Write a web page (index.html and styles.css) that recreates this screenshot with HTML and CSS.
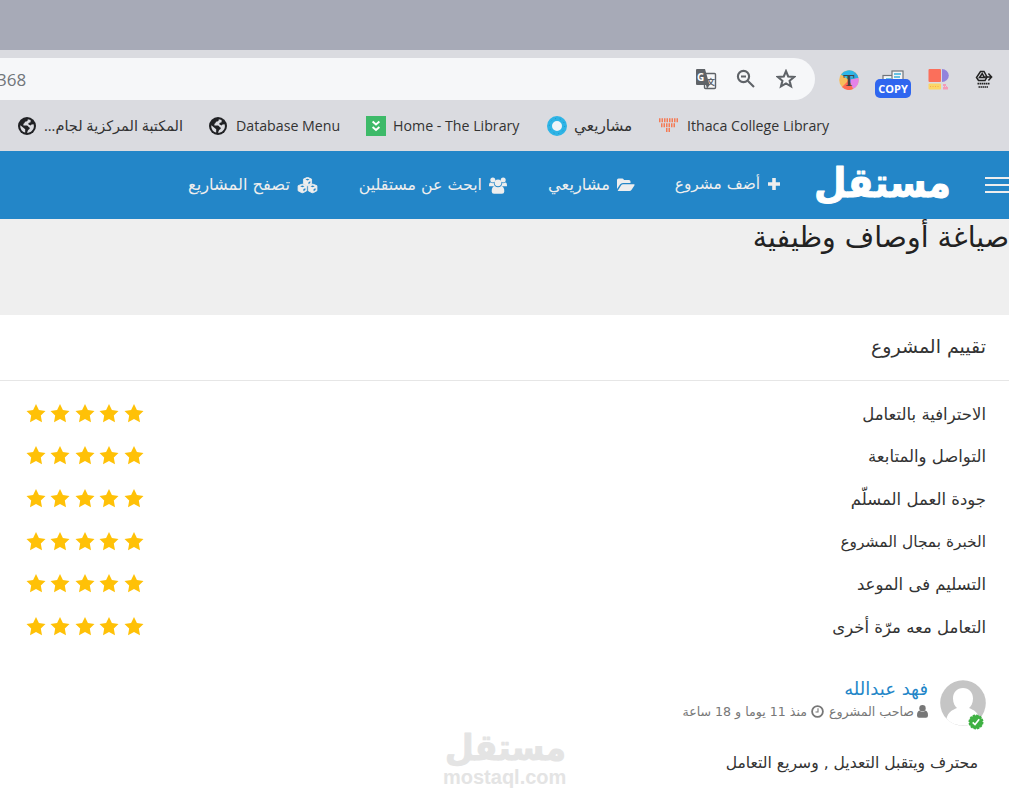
FILE: index.html
```html
<!DOCTYPE html>
<html lang="ar">

<head>
    <meta charset="UTF-8">
    <meta name="viewport" content="width=device-width, initial-scale=1.0">
    <title>مستقل</title>
    <link rel="stylesheet" href="styles.css">
</head>

<body>
    <!-- shared icons -->
    <svg class="sprite">
        <symbol id="globe" viewBox="0 0 18 18">
            <circle cx="9" cy="9" r="9" fill="#202124"/>
            <path d="M9.8 2.2 C10 4 8.4 4.6 7 4.8 C6.7 6 6 6.6 5.4 7 L5.4 8.4 L9 8.6 C10.5 9 10.4 10.6 11.8 10.8 C12 12.2 10.5 12.7 10 13.3 L9 15.8 C13 15.8 15.9 12.8 15.9 9 L15.6 7.3 L13.5 7.5 L12.6 8.4 L10.5 7.6 L10.4 6 L12.6 5.2 L12.6 3.1 Z" fill="#dadbe0"/>
            <path d="M2.3 8.2 L6 11.2 L7.2 12.2 L7.2 15.6 C4.2 15 2 12 2.3 8.2 Z" fill="#dadbe0"/>
        </symbol>
        <symbol id="star" viewBox="0 0 20 19">
            <path d="M10 0 L12.9 5.9 L19.5 6.9 L14.8 11.5 L16 18.2 L10 15 L4 18.2 L5.2 11.5 L0.5 6.9 L7.1 5.9 Z"/>
        </symbol>
        <symbol id="cube" viewBox="0 0 12 12">
            <path d="M6 0.4 L11.2 2.6 V8.6 L6 11.4 L0.8 8.6 V2.6 Z" fill="#eee" stroke="#eee" stroke-linejoin="round"/>
            <path d="M3.4 3.3 L6 2.3 L8.6 3.3 L6 4.4 Z M7.2 6.6 L9.6 5.5 V7.8 L7.2 9.1 Z" fill="#2386c8"/>
        </symbol>
    </svg>

    <div class="titlebar"></div>

    <!-- browser toolbar -->
    <div class="toolbar">
        <div class="address">
            <span class="url">368</span>
            <svg class="translate" width="22" height="22" viewBox="0 0 22 22">
                <rect x="9.5" y="5.5" width="11" height="15" rx="1" fill="none" stroke="#5f6368" stroke-width="1.4"/>
                <path d="M2 1 H10 L14.5 17 H2 Q1 17 1 16 V2 Q1 1 2 1 Z" fill="#5f6368"/>
                <path d="M11 17 L14.5 17 L12 21 Z" fill="#5f6368"/>
                <text x="2" y="13" class="g">G</text>
                <text x="11.4" y="16.5" class="wen">文</text>
            </svg>
            <svg class="zoom" width="20" height="20" viewBox="0 0 20 20" fill="none" stroke="#5f6368" stroke-width="2.1">
                <circle cx="7.5" cy="7.5" r="5.6"/>
                <path d="M5 7.5 H10 M11.7 11.7 L18 18"/>
            </svg>
            <svg class="fav" width="20" height="20" viewBox="0 0 20 20">
                <path d="M10 2.2 L12.2 7.5 L18 8 L13.6 11.8 L15 17.4 L10 14.4 L5 17.4 L6.4 11.8 L2 8 L7.8 7.5 Z" fill="none" stroke="#5f6368" stroke-width="2.1"/>
            </svg>
        </div>
        <svg class="ext ext_t" width="20" height="20" viewBox="0 0 20 20">
            <circle cx="10" cy="10" r="9.8" fill="#f6bd5c"/>
            <path d="M10 10 L2 4.5 A9.8 9.8 0 0 1 16 2.3 Z" fill="#2db6e8"/>
            <path d="M10 10 L16 2.3 A9.8 9.8 0 0 1 19.5 8 Z" fill="#27a9e0"/>
            <path d="M10 10 L19.5 8 A9.8 9.8 0 0 1 14 19 Z" fill="#e583e8"/>
            <path d="M10 10 L14 19 A9.8 9.8 0 0 1 3 17 Z" fill="#ff6b52"/>
            <text x="10" y="16" text-anchor="middle" class="tee">T</text>
        </svg>
        <div class="ext ext_copy">
            <svg width="24" height="14" viewBox="0 0 24 14" fill="#f4f5f7" stroke="#70757a" stroke-width="1.2">
                <rect x="1" y="5.5" width="12" height="10"/>
                <rect x="10" y="1" width="11" height="12"/>
                <path d="M12 4 H19 M12 7 H18 M4 9 H9" stroke="#3ab0dc" stroke-width="1.6"/>
            </svg>
            <span class="badge">COPY</span>
        </div>
        <svg class="ext ext_shapes" width="21" height="21" viewBox="0 0 21 21">
            <rect x="0.5" y="0" width="12.5" height="13" rx="1" fill="#fb6f5b"/>
            <path d="M14 0 A6.8 6.5 0 0 1 14 13 Z" fill="#9283dc"/>
            <rect x="0.5" y="14.5" width="12.5" height="6" rx="1" fill="#fcd566"/>
            <path d="M2 17.5 H12" stroke="#f4a850" stroke-dasharray="1 1.5"/>
            <path d="M15 15 H18 V17 H20 V20.5 H15 Z" fill="#f59bb8"/>
            <path d="M15 17.5 H20" stroke="#dadbe0" stroke-dasharray="1 1"/>
        </svg>
        <svg class="ext ext_drive" width="18" height="20" viewBox="0 0 18 20" fill="none" stroke="#222" stroke-width="1.5">
            <path d="M5.5 1.5 H9 L12 7 L10 10.5 H3.5 L1.5 7.5 Z M4.5 7.5 H9.6 L7.2 3.6 Z"/>
            <path d="M10 7 H16 M13.4 3.6 L16.6 7 L13.4 10.4"/>
            <path d="M2.5 13.6 H14.5" stroke-width="1.8" stroke-dasharray="1.6 0.5"/>
            <path d="M3.5 17 H13" stroke-width="1.6" stroke-dasharray="1.6 0.5"/>
        </svg>
    </div>

    <!-- bookmarks -->
    <div class="bookmarks">
        <a class="bm bm1"><svg width="18" height="18"><use href="#globe"/></svg><span dir="rtl">المكتبة المركزية لجام...</span></a>
        <a class="bm bm2"><svg width="18" height="18"><use href="#globe"/></svg><span>Database Menu</span></a>
        <a class="bm bm3">
            <svg width="20" height="20" viewBox="0 0 20 20">
                <rect width="20" height="20" fill="#3dba69"/>
                <path d="M6.6 5.5 L10 8.5 L13.4 5.5 M6.6 11 L10 14 L13.4 11" fill="none" stroke="#fff" stroke-width="1.9"/>
            </svg>
            <span>Home - The Library</span>
        </a>
        <a class="bm bm4">
            <svg width="20" height="20" viewBox="0 0 20 20" fill="none">
                <circle cx="10" cy="10" r="7.5" fill="#eef4f8" stroke="#2eb4e6" stroke-width="5"/>
                <circle cx="10" cy="10" r="7.6" stroke="#1b93c4" stroke-dasharray="1 3.8"/>
            </svg>
            <span dir="rtl">مشاريعي</span>
        </a>
        <a class="bm bm5">
            <svg width="20" height="20" viewBox="0 0 20 20" fill="none" stroke="#f47b55" stroke-width="4">
                <path d="M1 4.2 H20 M3 9.2 H18 M8 14 H13" stroke-dasharray="1.5 1"/>
            </svg>
            <span>Ithaca College Library</span>
        </a>
    </div>

    <!-- site header -->
    <header class="navbar" dir="rtl">
        <div class="menu"><i></i><i></i><i></i></div>
        <svg class="logo" viewBox="0 0 138 42" width="138" height="42">
            <text x="138" y="33" textLength="137" lengthAdjust="spacingAndGlyphs">مستقل</text>
        </svg>
        <a class="nav nav1">
            <svg width="14" height="14" viewBox="0 0 14 14"><path d="M7 0 V12 M1 6 H13" stroke="#eee" stroke-width="3.6"/></svg>
            <span>أضف مشروع</span>
        </a>
        <a class="nav nav2">
            <svg width="18" height="14" viewBox="0 0 18 14" fill="#eee">
                <path d="M0 11 V2 Q0 0.5 1.5 0.5 H5.5 Q6.5 0.5 7 2 H12 Q13.5 2 13.5 3.5 V5 H6 Q4 5 3 6.5 Z"/>
                <path d="M0.6 13 L4 7.5 Q4.8 6.2 6.2 6.2 H17 Q18 6.2 17.4 7.4 L14.6 11.8 Q13.7 13 12.4 13 Z"/>
            </svg>
            <span>مشاريعي</span>
        </a>
        <a class="nav nav3">
            <svg width="18" height="17" viewBox="0 0 18 17" fill="#eee">
                <circle cx="3.8" cy="3" r="2.5"/>
                <circle cx="14.2" cy="3" r="2.5"/>
                <path d="M0 9 Q0 5.4 1.8 5.6 Q3.8 6.7 5 6 Q4.8 8 6 9.2 H1.2 Q0 9.5 0 9 Z M18 9 Q18 5.4 16.2 5.6 Q14.2 6.7 13 6 Q13.2 8 12 9.2 H16.8 Q18 9.5 18 9 Z"/>
                <circle cx="9" cy="5.8" r="3.4"/>
                <path d="M5.8 9 Q9 11.5 12.2 9 Q15.4 9.5 15.3 14.5 Q15.2 16.7 13 16.7 H5 Q2.8 16.7 2.7 14.5 Q2.6 9.5 5.8 9 Z"/>
            </svg>
            <span>ابحث عن مستقلين</span>
        </a>
        <a class="nav nav4">
            <svg width="21" height="17" viewBox="0 0 21 17">
                <use href="#cube" x="5.2" y="0" width="10.6" height="9.4"/>
                <use href="#cube" x="0" y="6.6" width="10.8" height="10"/>
                <use href="#cube" x="10.2" y="6.6" width="10.8" height="10"/>
            </svg>
            <span>تصفح المشاريع</span>
        </a>
    </header>

    <div class="page_title" dir="rtl"><h1>صياغة أوصاف وظيفية</h1></div>

    <!-- project rating -->
    <main class="panel" dir="rtl">
        <h2>تقييم المشروع</h2>
        <ul class="ratings">
            <li><span>الاحترافية بالتعامل</span><div class="stars"></div></li>
            <li><span>التواصل والمتابعة</span><div class="stars"></div></li>
            <li><span>جودة العمل المسلّم</span><div class="stars"></div></li>
            <li><span class="tight">الخبرة بمجال المشروع</span><div class="stars"></div></li>
            <li><span>التسليم فى الموعد</span><div class="stars"></div></li>
            <li><span>التعامل معه مرّة أخرى</span><div class="stars"></div></li>
        </ul>

        <div class="review">
            <div class="avatar">
                <svg width="46" height="46" viewBox="0 0 46 46">
                    <circle cx="23" cy="23" r="22.8" fill="#c5c5c5"/>
                    <path d="M23 8 C29 8 33 12.5 33 18.5 C33 23 31 26.5 29 28 C34 30 38 32.5 39.5 38.5 C35 43.5 29 45.5 23 45.5 C17 45.5 11 43.5 6.5 38.5 C8 32.5 12 30 17 28 C15 26.5 13 23 13 18.5 C13 12.5 17 8 23 8 Z" fill="#fff"/>
                </svg>
                <svg class="verified" width="16" height="16" viewBox="0 0 16 16">
                    <circle cx="8" cy="8" r="6.7" fill="#3fb143" stroke="#3fb143" stroke-width="1.6" stroke-dasharray="2.4 1.1"/>
                    <path d="M4.7 8.4 L7 10.6 L11.2 5.2" fill="none" stroke="#fff" stroke-width="1.7"/>
                </svg>
            </div>
            <div class="author">
                <a class="name">فهد عبدالله</a>
                <div class="meta">
                    <svg width="11" height="13" viewBox="0 0 11 13" fill="#777">
                        <circle cx="5.5" cy="3.3" r="3.2"/>
                        <path d="M2.3 5.6 Q5.5 8.3 8.7 5.6 Q11 6.5 11 10.5 Q11 12.8 9 12.8 H2 Q0 12.8 0 10.5 Q0 6.5 2.3 5.6 Z"/>
                    </svg>
                    <span class="role">صاحب المشروع</span>
                    <svg class="clock" width="13" height="13" viewBox="0 0 13 13" fill="none" stroke="#777">
                        <circle cx="6.5" cy="6.5" r="5.4" stroke-width="1.8"/>
                        <path d="M7 3.3 V7 H4.5" stroke-width="1.1"/>
                    </svg>
                    <span class="time">منذ 11 يوما و 18 ساعة</span>
                </div>
            </div>
        </div>
        <p class="comment">محترف ويتقبل التعديل , وسريع التعامل</p>

        <div class="watermark">
            <svg class="logo" viewBox="0 0 122 37" width="122" height="37">
                <text x="122" y="29" textLength="121" lengthAdjust="spacingAndGlyphs">مستقل</text>
            </svg>
            <span dir="ltr">mostaql.com</span>
        </div>
    </main>

    <script>
        // five stars for every row
        const star = '<svg width="20" height="19"><use href="#star"/></svg>';
        document.querySelectorAll(".stars").forEach(el => {
            el.innerHTML = star.repeat(5);
        });
    </script>
</body>

</html>
```
FILE: styles.css
```css
* {
    margin: 0px;
    padding: 0px;
    box-sizing: border-box;
}

body {
    width: 1009px;
    height: 803px;
    overflow: hidden;
    background-color: #fff;
    font-family: "DejaVu Sans", sans-serif;
    color: #333;
}

ul {
    list-style: none;
}

span,
a {
    white-space: nowrap;
}

svg {
    flex: none;
}

.sprite {
    display: none;
}


/* ---------------- browser ---------------- */
.titlebar {
    height: 50px;
    background-color: #a7aab7;
}

.toolbar {
    height: 54px;
    padding-top: 8px;
    display: flex;
    background-color: #dadbe0;
}

.address {
    width: 815px;
    height: 42px;
    padding-right: 19px;
    border-radius: 0 21px 21px 0;
    background-color: #f6f7f9;
    display: flex;
    align-items: center;
}

.url {
    flex: 1;
    margin-left: -3px;
    font: 17px "Open Sans", sans-serif;
    color: #70757a;
}

.zoom {
    margin-left: 19px;
}

.fav {
    margin-left: 20px;
}

.g {
    font: bold 10px "Open Sans", sans-serif;
    fill: #fff;
}

.wen {
    font: bold 8.5px "Noto Sans CJK SC", sans-serif;
    fill: #5f6368;
}

.tee {
    font: bold 17px "Liberation Serif", serif;
    fill: #444;
}

.ext {
    margin-top: 12px;
}

.ext_t {
    margin-left: 24px;
}

.ext_copy {
    width: 36px;
    margin-left: 16px;
    display: flex;
    flex-direction: column;
    align-items: center;
}

.ext_copy svg {
    margin-left: 2px;
}

.badge {
    width: 36px;
    height: 19px;
    margin-top: -5px;
    z-index: 1;
    border-radius: 5px;
    background-color: #2f66ef;
    color: #fff;
    font: bold 11px/20px "Open Sans", sans-serif;
    text-align: center;
}

.ext_shapes {
    margin: 11px 0 0 17px;
}

.ext_drive {
    margin: 12px 0 0 26px;
}

.bookmarks {
    height: 47px;
    padding: 0 0 3px 18px;
    display: flex;
    align-items: center;
    background-color: #dadbe0;
}

.bm {
    display: flex;
    align-items: center;
    gap: 9px;
    font: 14.2px "Open Sans", "DejaVu Sans", sans-serif;
    color: #333;
}

.bm span {
    margin-top: -2px;
}

.bm1 {
    width: 191px;
    gap: 8px;
}

.bm1 span {
    font-size: 14.5px;
}

.bm2 {
    width: 157px;
}

.bm3 {
    width: 181px;
    gap: 7px;
}

.bm4 {
    width: 111px;
    gap: 7px;
}

.bm4 span {
    font-size: 15.3px;
}


/* ---------------- navbar ---------------- */
.navbar {
    height: 68px;
    display: flex;
    align-items: center;
    background-color: #2386c8;
    color: #eee;
}

.menu {
    width: 24px;
    display: flex;
    flex-direction: column;
    gap: 5px;
}

.menu i {
    height: 2px;
    background-color: #eee;
}

.logo {
    margin-right: 34px;
    overflow: visible;
    fill: #fff;
    stroke: #fff;
    stroke-width: 1px;
    stroke-linejoin: round;
}

.logo text {
    font: bold 41px "DejaVu Sans", sans-serif;
}

.nav {
    display: flex;
    align-items: center;
    gap: 7px;
    font-size: 16.3px;
}

.nav span {
    margin-top: -2px;
}

.nav1 {
    width: 146px;
    margin-right: 32px;
    font-size: 15.4px;
}

.nav2 {
    width: 128px;
}

.nav3 {
    width: 189px;
    font-size: 15.8px;
}


/* ---------------- content ---------------- */
.page_title {
    height: 96px;
    background-color: #efefef;
}

.page_title h1 {
    font-size: 28.4px;
    font-weight: normal;
    line-height: 38px;
    color: #222;
}

.panel {
    position: relative;
}

.panel h2 {
    height: 66px;
    padding-right: 23px;
    border-bottom: 1px solid #e6e6e6;
    font-size: 19px;
    font-weight: normal;
    line-height: 63px;
}

.ratings {
    padding: 11px 23px 0 26px;
}

.ratings li {
    height: 42.6px;
    display: flex;
    align-items: center;
    justify-content: space-between;
    font-size: 16.5px;
}

.ratings span {
    padding-top: 2px;
}

.ratings .tight {
    font-size: 15.4px;
}

.stars {
    display: flex;
    gap: 4.4px;
    fill: #ffc107;
}

.review {
    margin-top: 32px;
    padding-right: 23px;
    display: flex;
}

.avatar {
    position: relative;
    width: 46px;
    height: 46px;
}

.verified {
    position: absolute;
    left: 28px;
    bottom: -4px;
}

.author {
    margin-right: 12px;
}

.name {
    display: block;
    font-size: 18px;
    line-height: 18px;
    color: #2386c8;
}

.meta {
    margin-top: 5px;
    display: flex;
    align-items: center;
    font-size: 12.6px;
    line-height: 18px;
    color: #777;
}

.role {
    width: 87px;
    margin-right: 3px;
}

.clock {
    margin-left: 4px;
    margin-right: 3px;
}

.comment {
    margin-top: 25px;
    padding-right: 31px;
    font-size: 15.6px;
    line-height: 24px;
}

.watermark {
    position: absolute;
    left: 443px;
    top: 416px;
    width: 123px;
    text-align: center;
    color: #e4e4e4;
}

.watermark .logo {
    display: block;
    margin: 0;
    fill: #e4e4e4;
    stroke: #e4e4e4;
}

.watermark .logo text {
    font-size: 36px;
}

.watermark span {
    display: block;
    font: bold 20px/18px "Liberation Sans", sans-serif;
}
```
